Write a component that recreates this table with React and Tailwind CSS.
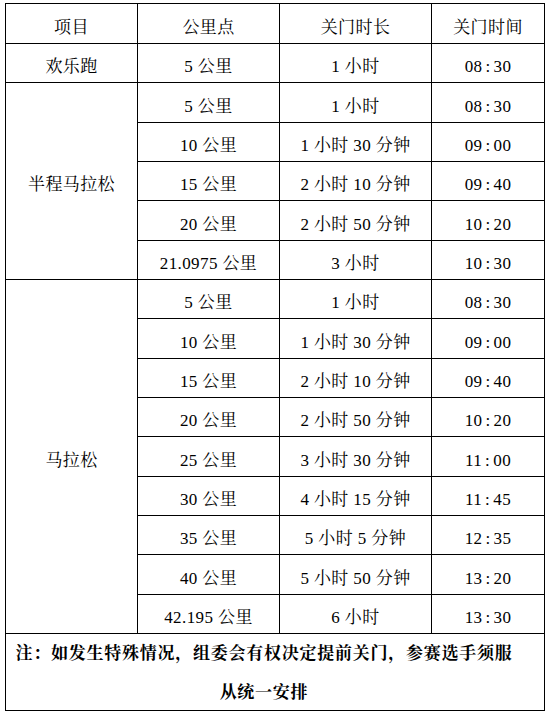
const ROWS = [
  ["欢乐跑", 1, [["5 公里", "1 小时", "08:30"]]],
  ["半程马拉松", 5, [
    ["5 公里", "1 小时", "08:30"],
    ["10 公里", "1 小时 30 分钟", "09:00"],
    ["15 公里", "2 小时 10 分钟", "09:40"],
    ["20 公里", "2 小时 50 分钟", "10:20"],
    ["21.0975 公里", "3 小时", "10:30"],
  ]],
  ["马拉松", 9, [
    ["5 公里", "1 小时", "08:30"],
    ["10 公里", "1 小时 30 分钟", "09:00"],
    ["15 公里", "2 小时 10 分钟", "09:40"],
    ["20 公里", "2 小时 50 分钟", "10:20"],
    ["25 公里", "3 小时 30 分钟", "11:00"],
    ["30 公里", "4 小时 15 分钟", "11:45"],
    ["35 公里", "5 小时 5 分钟", "12:35"],
    ["40 公里", "5 小时 50 分钟", "13:20"],
    ["42.195 公里", "6 小时", "13:30"],
  ]],
];

const SPAN = { 1: "row-span-1", 5: "row-span-5", 9: "row-span-9" };

const cell = "flex items-center justify-center pt-[8px] border-r border-b border-black whitespace-nowrap";

function Time({ value }) {
  const [h, m] = value.split(":");
  return <span>{h}<span className="mx-[3px]">:</span>{m}</span>;
}

export default function App() {
  return (
    <div className="bg-white w-[549px] h-[712px] pt-[3px] pl-[5px] text-black text-[17px] tracking-[0.4px] font-[family-name:'Liberation_Serif','Noto_Serif_CJK_SC','Noto_Sans_CJK_SC',serif]">
      <div className="grid w-[540px] grid-cols-[132px_142px_152px_113px] grid-rows-[40px_repeat(15,39.33px)_77px] border-l border-t border-black">
        {["项目", "公里点", "关门时长", "关门时间"].map((h) => (
          <div key={h} className={cell}>{h}</div>
        ))}
        {ROWS.map(([name, span, items]) => [
          <div key={name} className={`${cell} ${SPAN[span]}`}>{name}</div>,
          ...items.flatMap(([km, dur, time], i) => [
            <div key={`${name}-${i}-a`} className={cell}>{km}</div>,
            <div key={`${name}-${i}-b`} className={cell}>{dur}</div>,
            <div key={`${name}-${i}-c`} className={cell}><Time value={time} /></div>,
          ]),
        ])}
        <div className="col-span-4 border-r border-b border-black pl-[5px] pr-[27px] text-center font-bold leading-[39px] tracking-[0.75px]">
          注：如发生特殊情况，组委会有权决定提前关门，参赛选手须服从统一安排
        </div>
      </div>
    </div>
  );
}
